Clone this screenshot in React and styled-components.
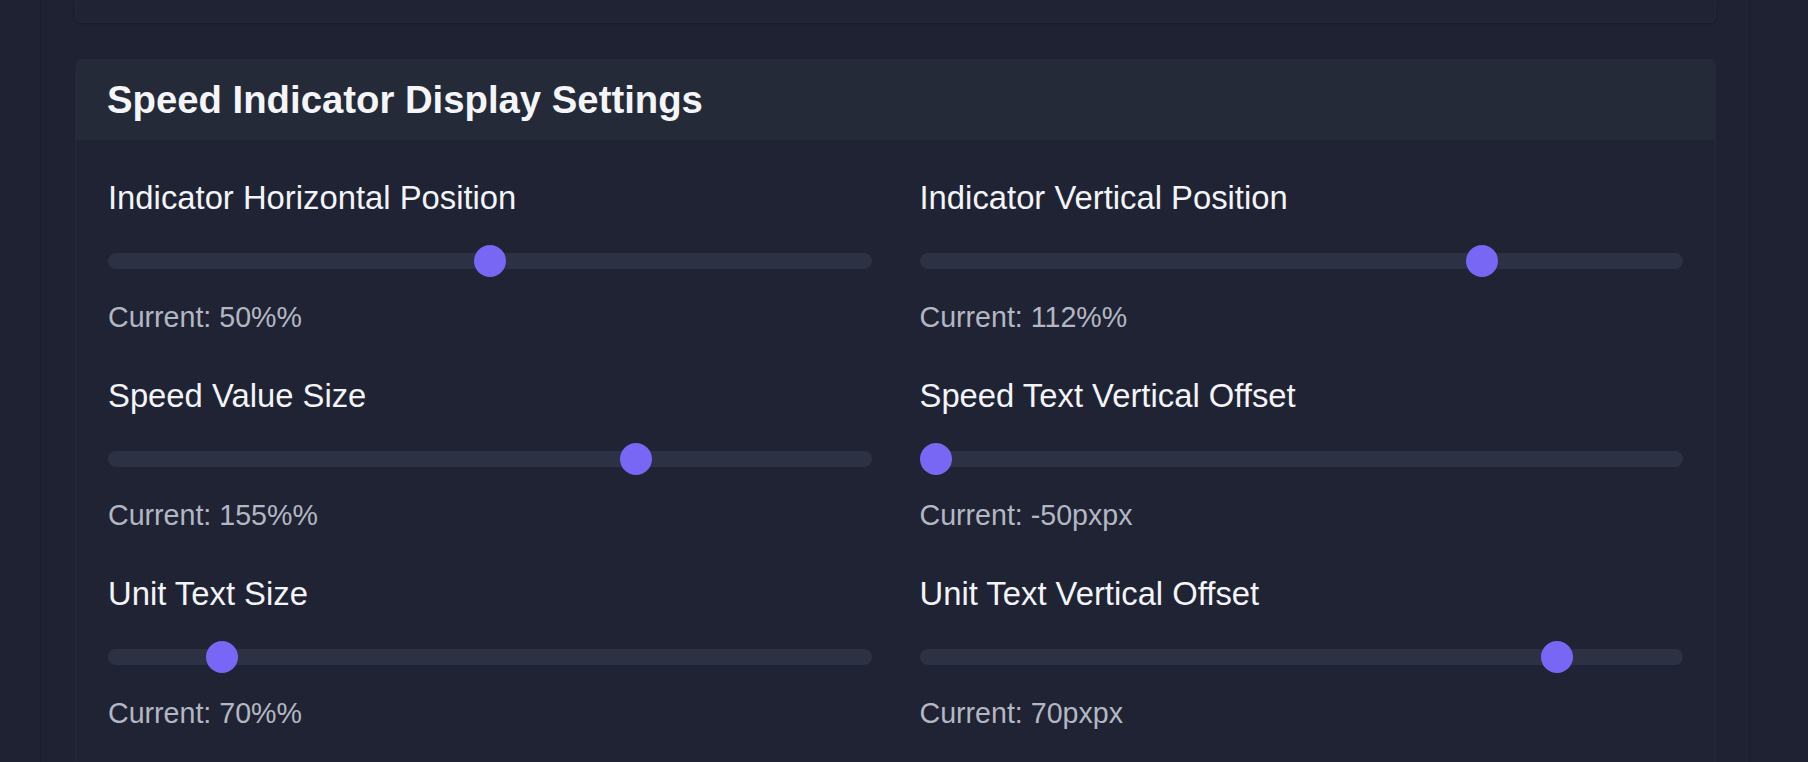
import { useState } from 'react'
import styled, { createGlobalStyle } from 'styled-components'

const GlobalStyle = createGlobalStyle`
  html, body {
    margin: 0;
    padding: 0;
    background: #1e2233;
    font-family: "Liberation Sans", Arial, sans-serif;
    overflow: hidden;
  }
`

const Page = styled.div`
  height: 762px;
  padding: 0 58px 0 40px;
  overflow: hidden;
`

const Column = styled.div`
  height: 100%;
  border-left: 1px solid #1a1e2d;
  border-right: 1px solid #1a1e2d;
  padding: 0 33px 0 34px;
  display: flex;
  flex-direction: column;
  gap: 36px;
`

const CardTail = styled.div`
  height: 22px;
  flex: none;
  background: #1f2334;
  border: 1px solid #242939;
  border-top: none;
  border-radius: 0 0 6px 6px;
  box-shadow: 0 1px 3px rgba(0, 0, 0, 0.25);
`

const Card = styled.section`
  flex: none;
  background: #1f2334;
  border: 1px solid #242939;
  border-radius: 6px;
  overflow: hidden;
`

const Header = styled.header`
  background: #252a38;
  padding: 16px 32px 16px 31px;
`

const Title = styled.h2`
  margin: 0;
  font-size: 38.3px;
  line-height: 48px;
  font-weight: 700;
  color: #f4f5f8;
`

const Body = styled.div`
  padding: 34px 32px 32px;
  display: grid;
  grid-template-columns: 1fr 1fr;
  column-gap: 48px;
  row-gap: 34px;
`

const Field = styled.div`
  display: flex;
  flex-direction: column;
`

const Label = styled.label`
  font-size: 32.8px;
  line-height: 48px;
  color: #f3f4f7;
`

const Range = styled.input`
  -webkit-appearance: none;
  appearance: none;
  display: block;
  width: 100%;
  height: 32px;
  margin: 23px 0 0;
  background: transparent;
  outline: none;

  &::-webkit-slider-runnable-track {
    height: 16px;
    border-radius: 8px;
    background: #2c3143;
  }

  &::-webkit-slider-thumb {
    -webkit-appearance: none;
    appearance: none;
    width: 32px;
    height: 32px;
    margin-top: -8px;
    border-radius: 50%;
    background: #7767f4;
    border: none;
    cursor: pointer;
  }
`

const Current = styled.div`
  margin-top: 19px;
  font-size: 28.6px;
  line-height: 42px;
  color: #b3b7c2;
`

const settings = [
  { id: 'hpos', label: 'Indicator Horizontal Position', min: 0, max: 100, value: 50, unit: '%' },
  { id: 'vpos', label: 'Indicator Vertical Position', min: 0, max: 150, value: 112, unit: '%' },
  { id: 'vsize', label: 'Speed Value Size', min: 50, max: 200, value: 155, unit: '%' },
  { id: 'voff', label: 'Speed Text Vertical Offset', min: -50, max: 100, value: -50, unit: 'px' },
  { id: 'usize', label: 'Unit Text Size', min: 50, max: 200, value: 70, unit: '%' },
  { id: 'uoff', label: 'Unit Text Vertical Offset', min: -100, max: 100, value: 70, unit: 'px' },
]

function Slider({ item, value, onChange }) {
  return (
    <Field>
      <Label htmlFor={item.id}>{item.label}</Label>
      <Range
        id={item.id}
        type="range"
        min={item.min}
        max={item.max}
        value={value}
        onChange={(e) => onChange(item.id, Number(e.target.value))}
      />
      {/* the unit gets doubled up in the original app, kept as is */}
      <Current>Current: {value}{item.unit}{item.unit}</Current>
    </Field>
  )
}

export default function App() {
  const [values, setValues] = useState(() =>
    Object.fromEntries(settings.map((s) => [s.id, s.value]))
  )

  const update = (id, v) => setValues((prev) => ({ ...prev, [id]: v }))

  return (
    <>
      <GlobalStyle />
      <Page>
        <Column>
          <CardTail />
          <Card>
            <Header>
              <Title>Speed Indicator Display Settings</Title>
            </Header>
            <Body>
              {settings.map((item) => (
                <Slider key={item.id} item={item} value={values[item.id]} onChange={update} />
              ))}
            </Body>
          </Card>
        </Column>
      </Page>
    </>
  )
}
